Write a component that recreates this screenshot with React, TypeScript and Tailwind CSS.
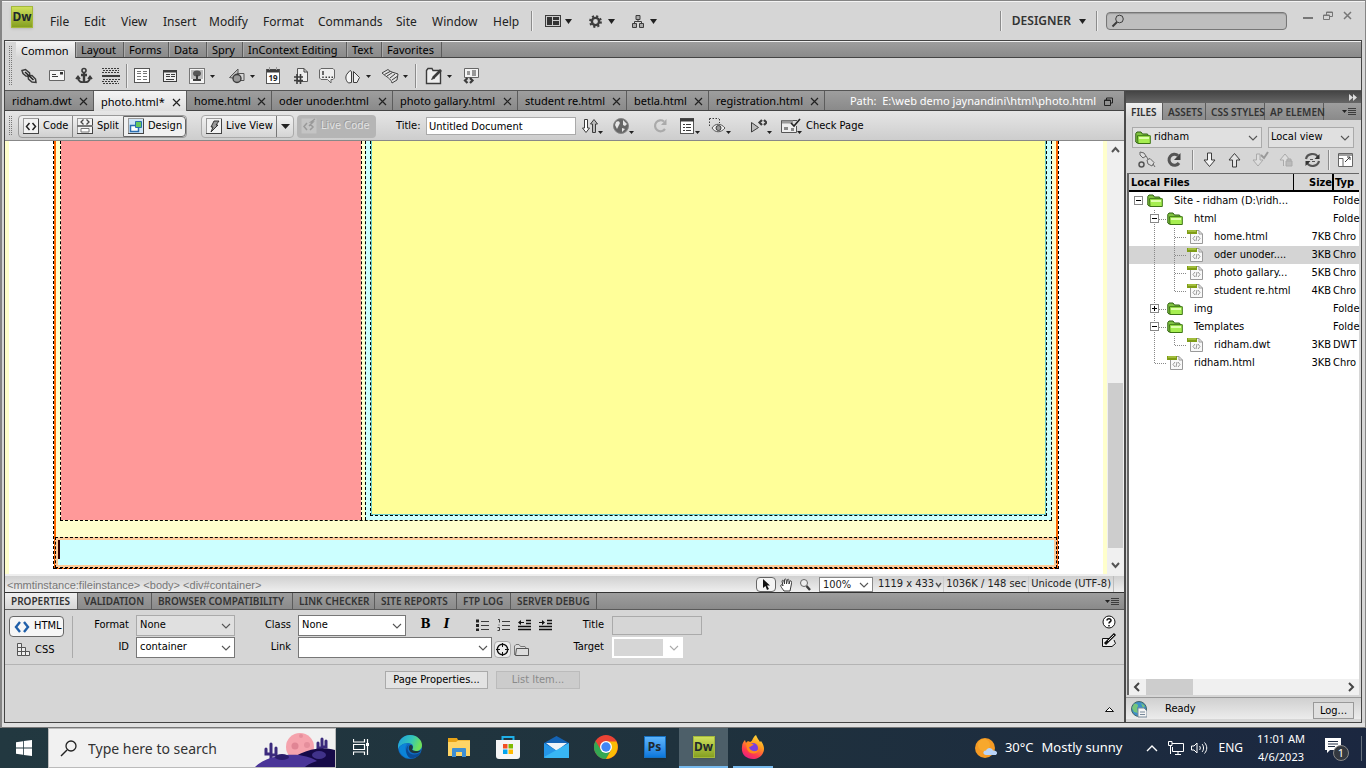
import React from "react";

const ui = "font-['Noto_Sans',sans-serif]";
const tahoma = "font-['DejaVu_Sans_Condensed','DejaVu_Sans',sans-serif]";

const Sep = ({ className = "h-6" }: { className?: string }) => (
  <span className={"w-0.5 shrink-0 border-l border-[#8c8c8c] bg-[#eeeeee] " + className} />
);
const Caret = ({ w = 5 }: { w?: number }) => (
  <svg width={w} height={w > 5 ? 5 : 3} viewBox="0 0 8 5" className="shrink-0" preserveAspectRatio="none">
    <path d="M0 0H8L4 5Z" fill="#222" />
  </svg>
);
const Chevron = ({ color = "#555" }: { color?: string }) => (
  <svg width="10" height="6" viewBox="0 0 10 6" className="pointer-events-none absolute top-1/2 right-1 -mt-[3px]">
    <path d="M1 1L5 5L9 1" fill="none" stroke={color} strokeWidth="1.1" />
  </svg>
);
const Grip = ({ h }: { h: number }) => (
  <svg width="4" height={h} className="shrink-0">
    {Array.from({ length: Math.floor(h / 2) }, (_, i) => (
      <path key={i} d={`M0 ${i * 2}.5H1M2 ${i * 2}.5H3`} stroke="#777" />
    ))}
  </svg>
);

function Icon({ children, w = 18, h = 18 }: { children: React.ReactNode; w?: number; h?: number }) {
  return (
    <svg width={w} height={h} viewBox={`0 0 ${w} ${h}`} fill="none" stroke="#3c3c3c" className="shrink-0" aria-hidden="true">
      {children}
    </svg>
  );
}

function Tool({ label, w, caret, children }: { label: string; w: string; caret?: boolean; children: React.ReactNode }) {
  return (
    <button aria-label={label} className={"flex h-6 shrink-0 items-center gap-1 " + w}>
      {children}
      {caret && <Caret />}
    </button>
  );
}

const AppLogo = ({ text, blue }: { text: string; blue?: boolean }) => (
  <span
    className={
      "flex h-[22px] w-[22px] shrink-0 items-center justify-center border text-[12px] leading-none font-bold text-[#20282c] shadow " +
      ui +
      (blue ? " border-[#1670c0] bg-linear-to-b from-[#5cb4fb] to-[#0878dc]" : " border-[#a4b83c] bg-linear-to-b from-[#cfe05a] to-[#86a020]")
    }
  >
    {text}
  </span>
);

function TitleBar() {
  const menus = [
    ["File", "w-[34px]"], ["Edit", "w-[37px]"], ["View", "w-[42px]"], ["Insert", "w-[46px]"], ["Modify", "w-[54px]"],
    ["Format", "w-[55px]"], ["Commands", "w-[78px]"], ["Site", "w-9"], ["Window", "w-[61px]"], ["Help", "w-[38px]"],
  ];
  return (
    <header className="flex h-[38px] shrink-0 items-center pr-3 pl-[9px] text-[#222]">
      <div className="mb-2 flex w-[39px] shrink-0"><AppLogo text="Dw" /></div>
      <nav className="flex pt-0.5 text-[12px]">
        {menus.map(([m, w]) => (
          <button key={m} className={"shrink-0 text-left whitespace-nowrap " + w}>{m}</button>
        ))}
      </nav>
      <Sep className="h-5" />
      <button aria-label="Layout" className="ml-3 flex w-11 items-center gap-1">
        <Icon w={16} h={12}>
          <rect x=".5" y=".5" width="15" height="11" fill="#ccc" />
          <path d="M2 2H7V10H2ZM8 2H14V5H8ZM8 6H14V10H8Z" fill="#333" stroke="none" />
        </Icon>
        <Caret w={7} />
      </button>
      <button aria-label="Extend" className="flex w-[43px] items-center gap-1.5">
        <Icon w={13} h={13}>
          <circle cx="6.5" cy="6.5" r="3.6" strokeWidth="2.4" />
          <circle cx="6.5" cy="6.5" r="5.4" strokeWidth="2" strokeDasharray="2.1 2.14" />
        </Icon>
        <Caret w={7} />
      </button>
      <button aria-label="Site" className="flex items-center gap-1.5">
        <Icon w={12} h={13}>
          <path d="M4 .5H8V4.5H4ZM.5 8.5H4.5V12.5H.5ZM7.5 8.5H11.5V12.5H7.5Z" fill="#aaa" />
          <path d="M6 5V6.500M2.500 8V6.500H9.500V8" />
        </Icon>
        <Caret w={7} />
      </button>
      <div className="grow" />
      <Sep className="h-5" />
      <button className="ml-2.5 flex items-center gap-2 text-[12px] font-semibold text-[#333]">DESIGNER <Caret w={7} /></button>
      <Sep className="mr-2 ml-2.5 h-5" />
      <label className="flex h-[18px] w-[181px] items-center rounded-sm border border-[#777] bg-[#bebebe] pl-1 shadow-[inset_0_1px_1px_#999]">
        <Icon w={14} h={14}><circle cx="8.5" cy="5" r="3.8" /><path d="M6 8L1.5 12.5" strokeWidth="2" /></Icon>
        <input aria-label="Search" className="h-4 w-full min-w-0 bg-transparent text-[11px] outline-none" />
      </label>
      <div className="mb-2.5 ml-4 flex items-center gap-2.5 *:flex">
        <button aria-label="Minimize"><Icon w={10} h={10}><path d="M0 7H10" stroke="#777" strokeWidth="2" /></Icon></button>
        <button aria-label="Restore"><Icon w={10} h={10}><path d="M3.5 4V1H9.5V5.5H7M.5 4H6.5V8.5H.5ZM.5 4.5H6M3 1.500H9" stroke="#777" /></Icon></button>
        <button aria-label="Close"><Icon w={10} h={10}><path d="M1 1L8 8M8 1L1 8" stroke="#777" strokeWidth="1.5" /></Icon></button>
      </div>
    </header>
  );
}

const stripBg = "bg-linear-to-b from-[#9e9e9e] to-[#8a8a8a]";

function InsertBar() {
  const tabs = [
    ["Common", "w-[60px]"], ["Layout", "w-12"], ["Forms", "w-[45px]"], ["Data", "w-[38px]"], ["Spry", "w-9"],
    ["InContext Editing", "w-[104px]"], ["Text", "w-[35px]"], ["Favorites", "w-[60px]"],
  ];
  return (
    <section className="flex h-[49px] shrink-0 border-t border-[#f0f0f0]">
      <div className="flex w-[11px] shrink-0 items-center pl-1"><Grip h={40} /></div>
      <div className="flex min-w-0 grow flex-col">
        <div className={"flex h-4 shrink-0 border-b border-[#444] text-[11px] leading-[15px] text-black " + stripBg}>
          {tabs.map(([t, w], i) => (
            <button
              key={t}
              className={
                "shrink-0 border-r border-[#5c5c5c] text-left whitespace-nowrap " + w + (i === 0 ? " -mb-px bg-linear-to-b from-[#f4f4f4] to-[#d6d6d6] pl-[5px]" : " border-l border-l-[#aaa] pl-1")
              }
            >
              {t}
            </button>
          ))}
        </div>
        <div className="flex grow items-center pt-1 pl-1">
          <Tool label="Hyperlink" w="w-7">
            <Icon>
              <path d="M2 3.500L5.500 2.500L9.500 6L10 9.500L6 9L3 6.500Z" fill="#ddd" strokeWidth="1.500" />
              <path d="M8 9L12 8.500L15.500 12L16 15.500L12 15L8.500 12Z" fill="#ddd" strokeWidth="1.500" />
              <path d="M5 5L13.500 13" stroke="#222" strokeWidth="1.500" />
            </Icon>
          </Tool>
          <Tool label="Email Link" w="w-[27px]">
            <Icon><path d="M1.5 3.5H16.5V13.5H1.5Z" fill="#f6f6f6" stroke="#666" /><path d="M4 9.500H10M4 7.500H8" /><path d="M12 5H15V7.500H12Z" fill="#333" stroke="none" /></Icon>
          </Tool>
          <Tool label="Named Anchor" w="w-[27px]">
            <Icon><circle cx="9" cy="3.500" r="2" strokeWidth="1.6" /><path d="M9 6V15M6 8H12" strokeWidth="2.4" /><path d="M2.500 10C3 14.500 6 15.500 9 15C12 15.500 15 14.500 15.500 10M1 12L3 9.500L5 12M13 12L15 9.500L17 12" strokeWidth="1.800" /></Icon>
          </Tool>
          <Tool label="Horizontal Rule" w="w-[24px]">
            <Icon><path d="M0 1.5H18M1 3.500H17M0 5.500H17M1 12.5H18M0 14.5H16M1 16.5H17" strokeDasharray="2 1" /><path d="M0 9H18" strokeWidth="2" /></Icon>
          </Tool>
          <Sep className="mr-1.5 h-6" />
          <Tool label="Table" w="w-7">
            <Icon w={16} h={16}><rect x=".5" y=".5" width="15" height="14" fill="#fff" stroke="#555" /><path d="M3 3.500H7M9 3.500H13M3 5.500H7M9 5.500H13M3 8.500H7M9 8.500H13M3 11.500H7M9 11.500H13" stroke="#777" /></Icon>
          </Tool>
          <Tool label="Insert Div" w="w-[26px]">
            <Icon w={16} h={16}><rect x="1.500" y="2.500" width="13" height="11" fill="#eee" /><path d="M2 3.500H14" strokeWidth="2" /><path d="M4 6.500H8M4 8.500H8M4 11.500H12M9 6.500H13M9 8.500H13" /></Icon>
          </Tool>
          <Tool label="Images" w="w-10" caret>
            <Icon><rect x="1.500" y="1.500" width="15" height="15" fill="#f4f4f4" stroke="#777" /><path d="M3 3H15V12H3Z" fill="#bbb" stroke="none" /><ellipse cx="9" cy="6.500" rx="4" ry="3" fill="#555" stroke="none" /><path d="M9 8V12M5 13H13" strokeWidth="2" /></Icon>
          </Tool>
          <Tool label="Media" w="w-[37px]" caret>
            <Icon><path d="M1.500 10.500L10 2V12Z" fill="#bbb" stroke="#555" /><path d="M9 6.500H16V13.500H9Z" fill="#d6d6d6" stroke="#555" /><circle cx="9" cy="11.500" r="4" fill="#999" strokeWidth="1.400" /></Icon>
          </Tool>
          <Tool label="Date" w="w-[27px]">
            <Icon w={16} h={18}><rect x="1.500" y="2.500" width="13" height="14" fill="#fff" stroke="#555" /><path d="M2 4H14" strokeWidth="3" /><path d="M4.500 0V3M11.500 0V3" stroke="#999" /><text x="8" y="14" fontSize="8" fontWeight="bold" textAnchor="middle" fill="#222" stroke="none">19</text></Icon>
          </Tool>
          <Tool label="Server-Side Include" w="w-[26px]">
            <Icon><path d="M5.500 1.500H12L15.500 5V14.500H5.500Z" fill="#eee" stroke="#555" /><path d="M12 1.500V5H15.500" /><path d="M2 10H11M2 13.500H11M5 7V17M8.500 7V17" strokeWidth="1.6" /></Icon>
          </Tool>
          <Tool label="Comment" w="w-[26px]">
            <Icon><path d="M3 1.500H15L16.500 3V11L15 12.500H13V16L9.500 12.500H3L1.500 11V3Z" fill="#eee" stroke="#666" /><path d="M5 4V8M5 9.500V11M7.500 10.200H9M10.500 10.200H12M13.500 10.200H15" strokeWidth="1.5" /></Icon>
          </Tool>
          <Tool label="Head" w="w-[37px]" caret>
            <Icon><path d="M4.500 16C1 13 1.500 9 3 7L6 3.500L7.500 4.500V15.500Z" fill="#f6f6f6" /><path d="M9.500 4.500L15.500 10.500L13 15.500H9.500Z" fill="#eee" /></Icon>
          </Tool>
          <Tool label="Script" w="w-[34px]" caret>
            <Icon><path d="M1 6L7 2.500C9 5 13 5.500 17 7L16 13L11 16C10 11.500 6 10.500 1 6Z" fill="#e2e2e2" stroke="#444" /><path d="M3.500 7.500L9 4.500M6 9L11.500 5.500M9 11L14 7M11 13L16 9.500" /></Icon>
          </Tool>
          <Sep className="mr-2 h-6" />
          <Tool label="Templates" w="w-[37px]" caret>
            <Icon><path d="M1.500 3.500L3 1.500H7L8 3.500H15.500V16.500H1.500Z" fill="#eee" strokeWidth="1.400" /><path d="M16 3L8.500 10.500" strokeWidth="2.6" /><path d="M8.500 9L6.500 12.500L10 11" fill="#333" strokeWidth=".8" /></Icon>
          </Tool>
          <Tool label="Tag Chooser" w="w-7">
            <Icon><path d="M2.500 1.500H16.500V10.500H2.500Z" fill="#f5f5f5" stroke="#666" /><path d="M10 4H14M10 6H14M10 8H14M5 5H8M5 7H8" /><path d="M5.500 11L3 13.500L5.500 16M8 11L10.500 13.500L8 16" strokeWidth="2.200" /></Icon>
          </Tool>
        </div>
      </div>
    </section>
  );
}

function DocTabs() {
  const tabs = [
    ["ridham.dwt", "w-[89px]"], ["photo.html*", "w-[93px]"], ["home.html", "w-[85px]"], ["oder unoder.html", "w-[121px]"],
    ["photo gallary.html", "w-[125px]"], ["student re.html", "w-[109px]"], ["betla.html", "w-[82px]"], ["registration.html", "w-[116px]"],
  ];
  return (
    <div className={"flex h-5 shrink-0 border-b border-[#444] text-[11px] text-black " + stripBg}>
      {tabs.map(([t, w], i) => (
        <button
          key={t}
          className={"flex shrink-0 items-center justify-between border-r border-[#5c5c5c] pt-0.5 pr-[5px] pl-[7px] whitespace-nowrap " + w + (i === 1 ? " -mb-px bg-linear-to-b from-[#f4f4f4] to-[#dedede]" : "")}
        >
          {t}
          <Icon w={9} h={9}><path d="M1 1L8 8M8 1L1 8" stroke="#222" strokeWidth="1.2" /></Icon>
        </button>
      ))}
      <div className="flex min-w-0 grow items-center justify-end gap-2 pt-0.5 pr-[11px] whitespace-pre text-white">
        <span>Path:  E:\web demo jaynandini\html\photo.html</span>
        <Icon w={9} h={9}><path d="M2.500 3V1H8.500V6H6.500M.5 3H6.500V8.500H.5ZM0 3.500H6" stroke="#222" /></Icon>
      </div>
    </div>
  );
}

const DocBox = ({ children }: { children: React.ReactNode }) => (
  <svg width="16" height="16" viewBox="0 0 16 16" fill="none" className="shrink-0">
    <rect x=".5" y=".5" width="15" height="15" fill="#f2f2f2" stroke="#999" />
    <path d="M0 15.500H16M15.500 1V15" stroke="#444" />
    {children}
  </svg>
);

function DocToolbar() {
  const b = "flex h-full shrink-0 items-center gap-1 pl-1 whitespace-nowrap ";
  return (
    <div className={"flex h-[30px] shrink-0 items-center border-b border-[#888] bg-linear-to-b from-[#e6e6e6] to-[#cdcdcd] pt-px pl-1 text-[11px] text-black " + tahoma}>
      <div className="w-[9px]"><Grip h={20} /></div>
      <div className="flex h-[23px] shrink-0 overflow-hidden rounded border border-[#999] bg-linear-to-b from-[#f2f2f2] to-[#d0d0d0]">
        <button className={b + "w-[54px] border-r border-[#888]"}>
          <DocBox><path d="M6.500 5L3.500 8.500L6.500 12M9.500 5L12.500 8.500L9.500 12" stroke="#222" strokeWidth="1.5" /></DocBox>Code
        </button>
        <button className={b + "w-[50px]"}>
          <DocBox><path d="M6.500 1.500L4 4L6.500 6.500M9.500 1.500L12 4L9.500 6.500" stroke="#444" strokeWidth="1.3" /><path d="M0 8H16" stroke="#777" strokeWidth="2" /><path d="M4 10.500H12V14H4Z" fill="#fff" stroke="#777" /></DocBox>Split
        </button>
        <button className={b + "w-[63px] rounded-r border border-[#666] bg-[#f0f0f0]"}>
          <DocBox><path d="M1 1H15V15H1Z" fill="#cfe4f6" /><path d="M2.500 7.500H10.500V13.500H2.500Z" fill="#fff" stroke="#2a6db0" strokeWidth="1.500" /><path d="M7.500 3.500H13.500V9.500H7.500Z" fill="#66c85a" stroke="#2a6db0" /></DocBox>Design
        </button>
      </div>
      <Sep className="mx-1.5" />
      <div className="flex h-[23px] shrink-0 rounded border border-[#aaa] bg-linear-to-b from-[#f2f2f2] to-[#d4d4d4]">
        <button className={b + "w-[75px] border-r border-[#777]"}>
          <DocBox><path d="M8 3H13L10 7H12L5 14L7 9H5Z" fill="#999" stroke="#222" strokeWidth=".9" /></DocBox>Live View
        </button>
        <button aria-label="Live View options" className="flex w-4 items-center justify-center"><Caret w={9} /></button>
      </div>
      <button disabled className={b + "ml-[3px] h-[23px]! w-[79px] rounded bg-[#b5b5b5] text-[#e2e2e2] [text-shadow:-1px_-1px_0_#999]"}>
        <svg width="16" height="16" fill="none" className="shrink-0"><rect width="15" height="15" x=".5" y=".5" fill="#c4c4c4" /><path d="M6 5L3 8.500L6 12M9 6L12 9L9 12M14 1L10 4H12L8 8" stroke="#999" strokeWidth="1.500" /></svg>Live Code
      </button>
      <Sep className="mr-3 ml-1.5" />
      <label htmlFor="doctitle" className="w-[30px] shrink-0">Title:</label>
      <input id="doctitle" defaultValue="Untitled Document" className="h-[18px] w-[150px] shrink-0 border border-[#aaa] bg-white px-0.5 outline-none" />
      <div className="ml-1.5 flex items-center [&_svg+svg]:mb-1 [&_svg+svg]:self-end">
        <Tool label="File management" w="w-[31px] gap-0!" caret>
          <Icon w={16}><path d="M2.500 2.500H5.500V11H7.500L4 15.500L.5 11H2.500Z" fill="#fff" /><path d="M10.500 15.500H13.500V7H15.500L12 2.500L8.500 7H10.500Z" fill="#bbb" /></Icon>
        </Tool>
        <Tool label="Preview in browser" w="w-[29px] gap-0!" caret>
          <Icon w={16}><circle cx="8" cy="9" r="7.500" fill="#666" stroke="#888" /><path d="M3 5C6 3 8 6 6 8L4 12L2 8ZM10 3L14 7L12 9L10 8ZM9 11L12 12L9 15Z" fill="#e6e6e6" stroke="none" /></Icon>
        </Tool>
        <Sep className="mr-2" />
        <Tool label="Refresh" w="w-7">
          <Icon w={16}><path d="M13 12A5.500 5.500 0 1 1 12 4.500" stroke="#aaa" strokeWidth="2.2" /><path d="M14.500 2V8H9Z" fill="#aaa" stroke="none" /></Icon>
        </Tool>
        <Tool label="View options" w="w-7 gap-0!" caret>
          <Icon w={15}><rect x=".5" y="1.500" width="13" height="15" fill="#fff" stroke="#555" /><path d="M0 3H14" strokeWidth="3" /><path d="M3 7.500H5M3 10.500H5M3 13.500H5M6 7.500H11M6 10.500H11M6 13.500H11" /></Icon>
        </Tool>
        <Tool label="Visual aids" w="w-[30px] gap-0!" caret>
          <Icon><path d="M1.500 1.500H11M1.500 1.500V10M11.500 2V6" strokeDasharray="1.500 1.500" /><path d="M4 11C7 6 13 6 17 11C13 16 7 16 4 11Z" fill="#eee" stroke="#555" /><circle cx="10.500" cy="11" r="2.500" fill="#999" /></Icon>
        </Tool>
        <Sep className="mr-2.5" />
        <Tool label="Validate" w="w-[30px] gap-0!" caret>
          <Icon w={17}><path d="M1.500 5.500V15L8.500 10.500Z" fill="#bbb" /><path d="M12 3L9.500 5.500L12 8M14 3L16.500 5.500L14 8" strokeWidth="2.200" /></Icon>
        </Tool>
        <button className="flex shrink-0 items-center gap-1 whitespace-nowrap">
          <Icon w={22}><path d="M1.500 3.500H17M1.500 3.500V15.500H16.500V9" fill="#eee" stroke="#555" /><path d="M2 5H13" stroke="#999" strokeWidth="3" /><path d="M4 10H8V13H4ZM11 11H14V14H11Z" fill="#888" stroke="none" /><path d="M11 6L14 9L20 2" stroke="#222" strokeWidth="1.600" /><path d="M17 14H22L19.500 17Z" fill="#222" stroke="none" /></Icon>
          Check Page
        </button>
        <Sep className="ml-2" />
      </div>
    </div>
  );
}

function Canvas() {
  return (
    <div className="flex min-h-0 grow bg-white">
      <div className="w-1 shrink-0 bg-[#ffffcc]" />
      <div className="flex min-w-0 grow px-11 pb-[5px]">
        <div className="flex grow border-x border-dashed border-black">
          <div className="flex min-w-0 grow flex-col border-b border-dashed border-black bg-[#ff6600] px-0.5">
            <div className="flex grow bg-[#ffffcc] px-1 pb-4">
              <div className="flex grow gap-[3px] border-b border-dashed border-black">
                <div className="w-[302px] shrink-0 border-x border-dashed border-black bg-[#ff9999] bg-clip-padding" />
                <div className="flex grow border-x border-dashed border-black bg-[#ccffff] px-1 pb-1">
                  <div className="grow border-x border-b border-dashed border-black">
                    <div className="h-full border-x border-b border-[#66cccc] bg-[#ffff99]" />
                  </div>
                </div>
              </div>
            </div>
            <div className="-mx-px h-[31px] shrink-0 border border-dashed border-black bg-[#ffcc99]">
              <div className="h-full border-2 border-[#ffcc99] bg-[#ccffff]"><div className="h-[19px] w-0.5 bg-[#330000]" /></div>
            </div>
          </div>
        </div>
      </div>
      <div className="w-1 shrink-0 bg-[#ffffcc]" />
      <div className="flex w-[17px] shrink-0 flex-col items-center bg-[#f0f0f0]">
        <Icon w={9} h={17}><path d="M1 11L4.500 7L8 11" stroke="#555" strokeWidth="2" /></Icon>
        <div className="grow-[225]" />
        <div className="w-[15px] grow-[165] bg-[#cdcdcd]" />
        <div className="grow-[9]" />
        <Icon w={9} h={17}><path d="M1 6L4.500 10L8 6" stroke="#555" strokeWidth="2" /></Icon>
      </div>
    </div>
  );
}

function StatusBar() {
  return (
    <div className={"flex h-[18px] shrink-0 items-center border-t-2 border-[#eeeeee] bg-linear-to-b from-[#d0d0d0] to-[#efefef] pt-px pr-1 text-[11px] whitespace-nowrap text-[#222] " + tahoma}>
      <div className="min-w-0 grow overflow-hidden pl-0.5 font-['Liberation_Sans',sans-serif] leading-4 text-[#777]">&lt;mmtinstance:fileinstance&gt; &lt;body&gt; &lt;div#container&gt;</div>
      <button aria-label="Select tool" className="flex h-[15px] w-5 items-center justify-center rounded border border-[#666] bg-[#f4f4f4]">
        <Icon w={10} h={13}><path d="M2 1V10L4.500 8L6 12L8 11L6 7.500H9Z" fill="#111" stroke="none" /></Icon>
      </button>
      <button aria-label="Hand tool" className="ml-1"><Icon w={13} h={14}><path d="M4 13C2 10 0 8 1 7C2 6 3 8 3 8L2 3C3 1 4 3 4.500 6V1.500C5.500 0 6.500 1 6.500 6L7.500 1.500C9 .5 9 2 9 6L10 3C11.500 2 12 4 11 8L10 13Z" fill="#fff" /></Icon></button>
      <button aria-label="Zoom tool" className="mx-1.5"><Icon w={12} h={14}><circle cx="5" cy="5" r="3.500" fill="#eee" stroke="#666" /><path d="M7.500 8L11 12" strokeWidth="2.400" /></Icon></button>
      <div className="relative ml-0.5 h-[15px]">
        <select aria-label="Magnification" className="block h-[15px] w-[54px] appearance-none border border-[#888] bg-white pl-[3px] text-[11px] leading-3"><option>100%</option></select>
        <Chevron />
      </div>
      <button className="ml-[5px] flex items-center">1119 x 433 <Icon w={9} h={6}><path d="M2 1L4.500 4.500L7 1" strokeWidth="1.500" stroke="#555" /></Icon></button>
      <span className="border-x border-[#ccc] px-0.5">1036K / 148 sec</span>
      <span className="border-r border-[#bbb] px-0.5">Unicode (UTF-8)</span>
      <span className="w-1.5" />
    </div>
  );
}

function Select({ id, value, w, cls = "border-[#777] bg-white", off }: { id: string; value: string; w: string; cls?: string; off?: boolean }) {
  return (
    <div className={"relative h-[21px] shrink-0 " + w}>
      <select id={id} disabled={off} className={"block h-full w-full appearance-none border pl-[3px] text-[11px] text-black " + cls}><option>{value}</option></select>
      <Chevron color={off ? "#aaa" : "#555"} />
    </div>
  );
}

function PanelMenu() {
  return <Icon w={15} h={9}><path d="M0 3H5L2.500 6Z" fill="#222" stroke="none" /><path d="M6 1.500H14M6 3.500H14M6 5.500H14M6 7.500H14" /></Icon>;
}

function Properties() {
  const tabs = [
    ["PROPERTIES", "w-[73px]"], ["VALIDATION", "w-[74px]"], ["BROWSER COMPATIBILITY", "w-[141px]"], ["LINK CHECKER", "w-[82px]"],
    ["SITE REPORTS", "w-[82px]"], ["FTP LOG", "w-[54px]"], ["SERVER DEBUG", "w-[86px]"],
  ];
  return (
    <section className="shrink-0 border-t border-[#333]">
      <div className={"flex h-[17px] items-center border-b border-[#5a5a5a] text-[10px] font-semibold text-[#333] " + stripBg}>
        {tabs.map(([t, w], i) => (
          <button key={t} className={"h-4 shrink-0 border-r border-[#5c5c5c] pl-[6px] text-left leading-4 whitespace-nowrap " + w + (i === 0 ? " bg-linear-to-b from-[#f0f0f0] to-[#d6d6d6]" : "")}>{t}</button>
        ))}
        <div className="grow" />
        <button aria-label="Panel menu" className="mr-1"><PanelMenu /></button>
      </div>
      <div className={"flex h-[55px] items-start border-b border-[#b4b4b4] pt-[5px] pl-1 text-[11px] text-black " + tahoma}>
        <div className="mt-px flex w-[55px] shrink-0 flex-col gap-1">
          <button className="flex h-[21px] items-center gap-1 rounded border border-[#666] bg-[#f6f6f6] pl-1">
            <Icon w={16} h={12}><path d="M6 1L2 6L6 11M10 1L14 6L10 11" stroke="#1f5ea8" strokeWidth="2.400" /></Icon>HTML
          </button>
          <button className="flex h-[18px] items-center gap-1 pl-2">
            <Icon w={14} h={14}><path d="M.5.5H4.500V12.500H.5ZM4.500 4.500H8.500V12.500H4.500ZM8.500 8.500H12.500V12.500H8.500ZM.5 4.500H5M.5 8.500H9" fill="#eee" stroke="#555" /></Icon>CSS
          </button>
        </div>
        <div className="mt-px ml-2 h-[42px] w-px shrink-0 bg-[#aaa]" />
        <div className="grid shrink-0 grid-cols-[56px_99px] items-center gap-x-[7px] gap-y-px text-right">
          <label htmlFor="fmt">Format</label><Select id="fmt" value="None" w="w-[99px]" cls="border-[#aaa] bg-[#e0e0e0]" />
          <label htmlFor="eid">ID</label><Select id="eid" value="container" w="w-[99px]" />
        </div>
        <div className="ml-[27px] grid shrink-0 grid-cols-[29px_108px_86px] items-center gap-x-[7px] gap-y-px text-right">
          <label htmlFor="cls">Class</label><Select id="cls" value="None" w="w-[108px]" />
          <div className="flex w-[152px] items-center pb-0.5 pl-0.5 *:w-[21px] *:shrink-0">
            <button aria-label="Bold"><b className="font-['DejaVu_Serif'] text-[12px] leading-4">B</b></button>
            <button aria-label="Italic" className="mr-[10px]"><i className="font-['DejaVu_Serif'] text-[12px] leading-4 font-bold">I</i></button>
            <button aria-label="Unordered list" className="ml-[9px]"><Icon w={13} h={12}><path d="M0 .5H3V3.500H0ZM0 5H3V8H0ZM0 9.500H3V12H0Z" fill="#222" stroke="none" /><path d="M5 2.500H13M5 6.500H13M5 10.500H13" /></Icon></button>
            <button aria-label="Ordered list"><Icon w={13} h={12}><path d="M1 .5H2.500V3.500M.5 8.500H2.500V11.500H.5M5 2.500H13M5 6.500H13M5 10.500H13M2 5.500V6.500" /></Icon></button>
            <button aria-label="Outdent"><Icon w={13} h={12}><path d="M8 1.500H13M8 4.500H13M0 7.500H13M0 10.500H13" stroke="#111" strokeWidth="1.600" /><path d="M0 3.500L3 1V6ZM3 3H6V4H3Z" fill="#111" stroke="none" /></Icon></button>
            <button aria-label="Indent"><Icon w={13} h={12}><path d="M8 1.500H13M8 4.500H13M0 7.500H13M0 10.500H13" stroke="#111" strokeWidth="1.600" /><path d="M6 3.500L3 1V6ZM0 3H3V4H0Z" fill="#111" stroke="none" /></Icon></button>
          </div>
          <label htmlFor="lnk">Link</label>
          <div className="relative col-span-2 h-[21px] w-[194px]">
            <input id="lnk" className="h-full w-full border border-[#777] bg-white px-1 outline-none" /><Chevron />
          </div>
        </div>
        <div className="-ml-[5px] flex shrink-0 items-center gap-0.5 pt-[26px]">
          <button aria-label="Point to file" className="flex h-[17px] w-[17px] items-center justify-center rounded border border-[#aaa] bg-[#eee]"><Icon w={13} h={13}><circle cx="6.500" cy="6.500" r="5.200" stroke="#111" strokeWidth="1.400" /><path d="M6.500 0V4M6.500 9V13M0 6.500H4M9 6.500H13" stroke="#111" /></Icon></button>
          <button aria-label="Browse"><Icon w={17} h={14}><path d="M1.500 12V3L3 1.500H6L7.500 3.500H12L13 5" fill="#ddd" stroke="#777" /><path d="M3.500 5.500H15.500V12.500H2.500Z" fill="#ddd" stroke="#555" /></Icon></button>
        </div>
        <div className="ml-[38px] grid shrink-0 grid-cols-[36px_90px] items-center gap-x-2 gap-y-px text-right">
          <label htmlFor="ttl">Title</label><input id="ttl" disabled className="my-px h-[19px] w-[90px] border border-[#aaa] bg-[#d6d6d6]" />
          <label htmlFor="tgt">Target</label><Select id="tgt" value="" w="w-[71px]" off cls="border-white bg-[#d6d6d6] border-y-2 border-l-2 border-r-[20px]" />
        </div>
        <div className="grow" />
        <div className="mr-[5px] flex w-5 flex-col items-center gap-1">
          <button aria-label="Help"><Icon w={14} h={14}><circle cx="7" cy="7" r="6" fill="#fff" stroke="#111" /><path d="M5 5.500C5 3 9 3 9 5.500C9 7 7 6.500 7 8.500M7 10V11.500" stroke="#111" strokeWidth="1.500" /></Icon></button>
          <button aria-label="Quick tag editor"><Icon w={16} h={15}><path d="M8 5.500H1.500V13.500H11L14.500 10.500L13 7" fill="#eee" stroke="#111" /><path d="M14 1L6 9L4 11" stroke="#111" strokeWidth="3" /><path d="M13 2L7 8" stroke="#ddd" /></Icon></button>
        </div>
      </div>
      <div className={"flex h-[57px] items-start pt-1.5 pr-[9px] text-[11px] " + tahoma}>
        <button className="ml-[380px] h-[18px] w-[103px] shrink-0 border border-[#aaa] bg-[#e3e3e3] leading-4 whitespace-nowrap text-black">Page Properties...</button>
        <button disabled className="ml-2 h-[18px] w-[84px] shrink-0 border border-[#bbb] bg-[#ccc] leading-4 text-[#8a8a8a]">List Item...</button>
        <div className="grow" />
        <button aria-label="Collapse" className="mt-[34px]"><Icon w={11} h={8}><path d="M1.500 6.500L5.500 2.500L9.500 6.500Z" fill="#fff" stroke="#111" /></Icon></button>
      </div>
    </section>
  );
}

const Folder = () => (
  <svg width="16" height="14" viewBox="0 0 16 14" className="shrink-0">
    <path d="M.8 11V2.500L2 1H6L7.500 3H12.500L13.500 5V12H2Z" fill="#7fc241" stroke="#2f5e10" />
    <path d="M2.500 4.700H15.300V12.500H3Z" fill="#a6ee50" stroke="#3c7414" />
    <path d="M4 6H14V8H4Z" fill="#ddffaa" />
  </svg>
);
const HtmlFile = () => (
  <svg width="17" height="16" viewBox="0 0 17 16" className="shrink-0" fill="none">
    <path d="M3.500 1.500H12L15.500 5V14.500H3.500Z" fill="#f8f8f8" stroke="#999" />
    <path d="M12 1.500V5H15.500" stroke="#999" />
    <path d="M8 7L6 9.500L8 12M11 7L13 9.500L11 12M10 7L9 12" stroke="#999" />
    <path d="M0 1H10V5H0Z" fill="#7f9d16" /><path d="M1 2H9" stroke="#c4dc62" />
  </svg>
);

type Node = { name: string; size: string; type: string; depth: number; kind: "open" | "closed" | "file"; last?: boolean; trunk?: boolean };
const files: Node[] = [
  { name: "Site - ridham (D:\\ridh...", size: "", type: "Folde", depth: 0, kind: "open" },
  { name: "html", size: "", type: "Folde", depth: 1, kind: "open" },
  { name: "home.html", size: "7KB", type: "Chro", depth: 2, kind: "file", trunk: true },
  { name: "oder unoder....", size: "3KB", type: "Chro", depth: 2, kind: "file", trunk: true },
  { name: "photo gallary...", size: "5KB", type: "Chro", depth: 2, kind: "file", trunk: true },
  { name: "student re.html", size: "4KB", type: "Chro", depth: 2, kind: "file", trunk: true, last: true },
  { name: "img", size: "", type: "Folde", depth: 1, kind: "closed" },
  { name: "Templates", size: "", type: "Folde", depth: 1, kind: "open" },
  { name: "ridham.dwt", size: "3KB", type: "DWT", depth: 2, kind: "file", trunk: true, last: true },
  { name: "ridham.html", size: "3KB", type: "Chro", depth: 1, kind: "file", last: true },
];

function TreeGuide({ n }: { n: Node }) {
  const w = 18 + n.depth * 20;
  const x = n.depth === 2 ? 46 : 26;
  return (
    <svg width={w} height="18" className="shrink-0" fill="none" stroke="#888">
      <g strokeDasharray="1 1">
        {n.depth > 0 && <path d={`M${x - 0.5} 0V${n.last ? 9 : 18}M${x} 9.500H${w}`} />}
        {n.trunk && <path d="M25.500 0V18" />}
      </g>
      {n.kind !== "file" && (
        <g>
          <rect x={n.depth * 16 + 5.5} y="4.500" width="8" height="8" fill="#fff" />
          <path d={`M${n.depth * 16 + 7} 8.500H${n.depth * 16 + 12}`} stroke="#000" />
          {n.kind === "closed" && <path d={`M${n.depth * 16 + 9.5} 6V11`} stroke="#000" />}
        </g>
      )}
    </svg>
  );
}

function FilesPanel() {
  const tabs = [["FILES", "w-[37px]"], ["ASSETS", "w-[43px]"], ["CSS STYLES", "w-[59px]"], ["AP ELEMEN", "w-[59px]"]];
  return (
    <aside className="flex w-[237px] shrink-0 flex-col border-l-2 border-[#4a4a4a]">
      <div className="flex h-3 shrink-0 items-center justify-end bg-linear-to-b from-[#444] to-[#666] pr-1">
        <button aria-label="Collapse to icons"><Icon w={8} h={7}><path d="M0 0L4 3.500L0 7ZM4 0L8 3.500L4 7Z" fill="#ddd" stroke="none" /></Icon></button>
      </div>
      <div className={"flex h-[17px] shrink-0 items-center text-[10px] font-semibold text-[#333] " + stripBg}>
        {tabs.map(([t, w], i) => (
          <button key={t} className={"h-full shrink-0 border-r border-[#5c5c5c] pl-[5px] text-left leading-4 whitespace-nowrap " + w + (i === 0 ? " bg-linear-to-b from-[#f0f0f0] to-[#d6d6d6]" : "")}>{t}</button>
        ))}
        <div className="grow" />
        <button aria-label="Panel menu" className="mr-1"><PanelMenu /></button>
      </div>
      <div className={"flex shrink-0 items-center gap-1.5 pt-[7px] pl-1.5 " + tahoma}>
        <div className="relative">
          <select aria-label="Site" className="block h-[21px] w-[130px] appearance-none border border-[#aaa] bg-[#e0e0e0] pl-[21px] text-[11px]"><option>ridham</option></select>
          <span className="pointer-events-none absolute top-1 left-[3px]"><Folder /></span><Chevron />
        </div>
        <div className="relative">
          <select aria-label="View" className="block h-[21px] w-[86px] appearance-none border border-[#aaa] bg-[#e0e0e0] pl-[2px] text-[11px]"><option>Local view</option></select><Chevron />
        </div>
      </div>
      <div className="flex h-[25px] shrink-0 items-center pb-0.5 pl-3">
        <Tool label="Connect" w="w-7"><Icon><path d="M2 1L6 2L8 5L5 7L2 4ZM9 9L12 7.500L16 11.500L14 15L10 13Z" stroke="#666" fill="#ddd" /><path d="M8 5L10 8M15 13L17 16" stroke="#666" /><circle cx="3.500" cy="13.500" r="2.500" strokeWidth="1.500" stroke="#555" /></Icon></Tool>
        <Tool label="Refresh" w="w-[26px]"><Icon w={16}><path d="M13 12A5.500 5.500 0 1 1 12 4.500" strokeWidth="3" stroke="#555" /><path d="M14.500 2V9H8Z" fill="#444" stroke="none" /></Icon></Tool>
        <Sep className="mr-2 h-5" />
        <Tool label="Get" w="w-[25px]"><Icon w={15}><path d="M5.500 2H9.500V9H13L7.500 15.500L2 9H5.500Z" fill="#f4f4f4" /></Icon></Tool>
        <Tool label="Put" w="w-[25px]"><Icon w={15}><path d="M5.500 16H9.500V9H13L7.500 2.500L2 9H5.500Z" fill="#e4e4e4" /></Icon></Tool>
        <Tool label="Check out" w="w-[26px]"><Icon w={17}><path d="M4.500 3H8V9H11L6 15L1 9H4.500Z" fill="#ddd" stroke="#aaa" /><path d="M9 4L12 7L16 1" stroke="#999" strokeWidth="2" /></Icon></Tool>
        <Tool label="Check in" w="w-[26px]"><Icon w={16}><path d="M5.500 15V9H2L7 3L12 9" fill="#ddd" stroke="#aaa" /><path d="M8 10H14V15H8ZM9 10V8H13V10" fill="#bbb" stroke="#aaa" /></Icon></Tool>
        <Tool label="Synchronize" w="w-[24px]"><Icon w={17}><path d="M2 8A6.500 6 0 0 1 14 6M15 10A6.500 6 0 0 1 3 12" strokeWidth="2.200" stroke="#555" /><path d="M15.500 3V8H10.500ZM1.500 15V10H6.500Z" fill="#333" stroke="none" /><path d="M6 8.500H9M8 10.500H11" stroke="#555" /></Icon></Tool>
        <Sep className="mr-2 h-5" />
        <Tool label="Expand" w="w-4"><Icon w={15} h={16}><path d="M.5 1.500H14.500V14.500H.5ZM.5 6.500H5V14.500" fill="#fff" stroke="#666" /><path d="M.5 3H14M7 10L12 5M9 5H12V8" /></Icon></Tool>
      </div>
      <div className={"mr-0.5 ml-px flex min-h-0 grow flex-col border-t border-l-2 border-[#666] bg-white text-[11px] " + tahoma}>
        <table className="w-full table-fixed border-collapse text-black">
          <thead>
            <tr className="h-4 border-b-2 border-black bg-[#d6d6d6] text-left leading-[14px] whitespace-nowrap">
              <th className="border-r border-black p-0 pt-0.5 pl-0.5">Local Files</th>
              <th className="w-10 border-r-2 border-black p-0 pt-0.5 text-right">Size</th>
              <th className="w-[26px] p-0 pt-0.5 pl-px">Typ</th>
            </tr>
          </thead>
          <tbody>
            {files.map((n, i) => (
              <tr key={n.name} className={"h-[18px] leading-[18px] whitespace-nowrap " + (i === 3 ? "bg-[#d4d4d4]" : "")}>
                <td className="p-0">
                  <div className="flex h-[18px] items-center"><TreeGuide n={n} />{n.kind === "file" ? <HtmlFile /> : <Folder />}<span className={n.kind === "file" ? "pl-2.5" : "pl-[11px]"}>{n.name}</span></div>
                </td>
                <td className="p-0 pr-0.5 text-right">{n.size}</td>
                <td className="p-0">{n.type}</td>
              </tr>
            ))}
          </tbody>
        </table>
        <div className="grow" />
        <div className="flex h-4 shrink-0 items-center bg-[#f0f0f0]">
          <Icon w={17} h={10}><path d="M10 1L6 5L10 9" stroke="#444" strokeWidth="2" /></Icon>
          <div className="h-4 w-[47px] bg-[#cdcdcd]" />
          <div className="grow" />
          <Icon w={17} h={10}><path d="M7 1L11 5L7 9" stroke="#444" strokeWidth="2" /></Icon>
        </div>
      </div>
      <div className={"mt-0.5 mb-[3px] flex h-[22px] shrink-0 items-center border-t border-[#999] bg-linear-to-b from-[#d0d0d0] to-[#ececec] pt-0.5 pr-[7px] pl-[5px] text-[11px] text-black " + tahoma}>
        <svg width="16" height="17" viewBox="0 0 16 17"><circle cx="8" cy="8" r="7.500" fill="#3d8fc8" stroke="#466" /><path d="M3 3C7 2 8 5 6 7L7 12L3 11L1 7ZM10 2L14 5L12 7Z" fill="#76c67a" /><path d="M7 7H13L16 10V16H7Z" fill="#f4f4f4" stroke="#789" /><path d="M9 11H14M9 13.500H14" stroke="#789" /></svg>
        <span className="ml-[18px] grow">Ready</span>
        <button className="mt-0.5 h-[17px] w-[41px] border border-[#999] bg-[#e0e0e0] leading-[14px]">Log...</button>
      </div>
    </aside>
  );
}

function TaskApp({ label, children, active, line }: { label: string; children: React.ReactNode; active?: boolean; line?: boolean }) {
  return (
    <button aria-label={label} className={"flex h-10 w-[49px] shrink-0 flex-col items-center " + (active ? "bg-[#4d5f69]" : "")}>
      <span className="flex h-[38px] items-center">{children}</span>
      <span className={"h-0.5 " + (active ? "w-full bg-[#76b9ed]" : line ? "w-10 bg-[#76b9ed]" : "")} />
    </button>
  );
}

function Taskbar() {
  return (
    <footer className="flex h-10 shrink-0 items-center bg-linear-to-r from-[#223840] via-[#1f323d] to-[#1b2740] text-white">
      <button aria-label="Start" className="flex w-12 shrink-0 justify-center">
        <svg width="16" height="16" viewBox="0 0 16 16" fill="#fff"><path d="M0 2.300L7 1.200V7.600H0ZM7.800 1L16 0V7.600H7.800ZM0 8.400H7V14.800L0 13.800ZM7.800 8.400H16V16L7.800 15Z" /></svg>
      </button>
      <label className="relative flex h-10 w-72 shrink-0 items-center gap-[11px] overflow-hidden border border-[#bbb] bg-[#f1f1f1] pl-[11px] text-[#333]">
        <Icon w={17} h={17}><circle cx="11" cy="6" r="5" stroke="#222" strokeWidth="1.300" /><path d="M7 10L1 16" stroke="#222" strokeWidth="1.400" /></Icon>
        <input placeholder="Type here to search" className="w-[150px] bg-transparent text-[14px] outline-none placeholder:text-[#333]" />
        <svg width="80" height="38" viewBox="0 0 80 38" className="absolute right-0 bottom-0">
          <circle cx="45" cy="18" r="14" fill="#f5a3ad" /><circle cx="40" cy="17" r="3.500" fill="#e08594" /><circle cx="52" cy="16" r="3" fill="#e58f9c" /><circle cx="46" cy="7" r="2" fill="#e58f9c" />
          <path d="M16 33V15M11 20V25H16M21 19V26H16M67 26V10M63 14V19H67M71 12V18H67" stroke="#3b2a7c" strokeWidth="3" strokeLinecap="round" fill="none" />
          <path d="M26 38C36 28 56 15 80 21V38Z" fill="#160a48" /><path d="M0 38C12 26 34 25 44 26C50 27 58 29 62 32C56 34 52 36 50 38Z" fill="#4a3598" /><ellipse cx="27" cy="28" rx="7" ry="3" fill="#2b1d6a" /><ellipse cx="64" cy="26" rx="7" ry="4" fill="#40328a" />
        </svg>
      </label>
      <TaskApp label="Task View">
        <Icon w={16} h={16}><path d="M.5 0V3H11.500V0M.5 16V13H11.500V16M.5 5.500H11.500V10.500H.5ZM14.500 0V16" stroke="#fff" strokeWidth="1.200" /><path d="M13 4H16V7H13Z" fill="#fff" stroke="none" /></Icon>
      </TaskApp>
      <TaskApp label="Edge">
        <svg width="24" height="24" viewBox="0 0 24 24">
          <defs><linearGradient id="e1" x1="0" y1="0" x2="1" y2=".3"><stop stopColor="#1e9de0" /><stop offset=".6" stopColor="#34c6b8" /><stop offset="1" stopColor="#6fe05a" /></linearGradient></defs>
          <circle cx="12" cy="12" r="12" fill="#0f6cc4" />
          <path d="M0 11C1 4 6 0 12 0C19 0 24 5 24 10C24 14 21 16 18 16C15 16 14 15 14.500 14C16 12 15 8 10 8C5 8 1 11 0 14Z" fill="url(#e1)" />
          <path d="M9 9C6 12 7 19 13 22C9 25 2 20 1 14C2 10 6 8 9 9Z" fill="#0b84d8" />
          <path d="M11 10C8 13 10 19 15 19.500C19 20 22 18 23 17C21 22 15 24 12 23C7 20 7 12 11 10Z" fill="#0a4a94" />
          <path d="M11.500 10.500C10 13 11 17 15 18C19 19 22 17 23.500 15C21 17 15 16 14 14.500C16 12 14 9 11.500 10.500Z" fill="#1e3640" />
        </svg>
      </TaskApp>
      <TaskApp label="File Explorer">
        <svg width="22" height="19" viewBox="0 0 22 19"><path d="M0 0H9L10 2H22V6H0Z" fill="#e8a317" /><path d="M0 4H8L10 2.500H22V18H0Z" fill="#ffd566" /><path d="M4 11C4 10.500 4.500 10 5 10H17C17.500 10 18 10.500 18 11V19H14V14H8V19H4Z" fill="#3f8fd2" /></svg>
      </TaskApp>
      <TaskApp label="Store">
        <svg width="24" height="24" viewBox="0 0 24 24"><path d="M6.500 6V2H17.500V6" fill="none" stroke="#1fb0e8" strokeWidth="2" /><path d="M0 5H24V21C24 23 23 24 21 24H3C1 24 0 23 0 21Z" fill="#f5f5f5" /><path d="M7 9H11.500V13.500H7Z" fill="#f25022" /><path d="M12.500 9H17V13.500H12.500Z" fill="#7fba00" /><path d="M7 14.500H11.500V19H7Z" fill="#00a4ef" /><path d="M12.500 14.500H17V19H12.500Z" fill="#ffb900" /></svg>
      </TaskApp>
      <TaskApp label="Mail">
        <svg width="25" height="22" viewBox="0 0 25 22"><path d="M0 7L12.500 0L25 7V12H0Z" fill="#1463b4" /><path d="M2 7H23L12.500 15Z" fill="#eef3f8" /><path d="M0 7L25 22H0Z" fill="#2596e8" /><path d="M25 7V22H2L0 21Z" fill="#38b6f4" /></svg>
      </TaskApp>
      <TaskApp label="Chrome">
        <svg width="24" height="24" viewBox="0 0 24 24"><circle cx="12" cy="12" r="12" fill="#ea4335" /><path d="M1.600 6A12 12 0 0 0 12 24L17 15L12 12L7 15Z" fill="#34a853" /><path d="M22.400 6.500H12L17.200 15L12 24A12 12 0 0 0 22.400 6.500Z" fill="#fbbc05" /><circle cx="12" cy="12" r="6" fill="#fff" /><circle cx="12" cy="12" r="4.700" fill="#4285f4" /></svg>
      </TaskApp>
      <TaskApp label="Photoshop"><AppLogo text="Ps" blue /></TaskApp>
      <TaskApp label="Dreamweaver" active><AppLogo text="Dw" /></TaskApp>
      <TaskApp label="Firefox" line>
        <svg width="24" height="24" viewBox="0 0 24 24">
          <defs><linearGradient id="f1" x1=".8" y1="0" x2=".3" y2="1"><stop stopColor="#ffe33e" /><stop offset=".4" stopColor="#ff9a1f" /><stop offset=".75" stopColor="#ff3b4e" /><stop offset="1" stopColor="#e61e82" /></linearGradient></defs>
          <path d="M12 24C5 24 0 19 1 12C1 8 3 6 4 5L5 8C6 6 8 6 9 7C12 6 11 3 15 0C16 3 18 5 19 7L20 6C23 10 24 14 22 18C20 22 16 24 12 24Z" fill="url(#f1)" />
          <circle cx="12" cy="13" r="5" fill="#7a3fe0" /><path d="M5 9C8 7 11 8 13 10C11 10 10 12 8 12C9 16 14 18 18 14C17 20 8 20 6 14Z" fill="#ff8a1c" />
        </svg>
      </TaskApp>
      <div className="grow" />
      <button className="flex shrink-0 items-center gap-2 text-[13px] whitespace-nowrap">
        <svg width="22" height="20" viewBox="0 0 22 20"><circle cx="10" cy="10" r="10" fill="#f59a23" /><circle cx="9" cy="7" r="6" fill="#f9b233" opacity=".6" /><path d="M11 17C8 17 7 13 11 12.500C12 9 17 9 18 12.500C23 12 23 17 20 17Z" fill="#b9d4f8" /></svg>
        <span>30°C</span><span>Mostly sunny</span>
      </button>
      <button aria-label="Show hidden icons" className="ml-6"><Icon w={12} h={8}><path d="M1 7L6 2L11 7" stroke="#fff" strokeWidth="1.400" /></Icon></button>
      <button aria-label="Network" className="ml-2.5"><Icon w={17} h={15}><path d="M4 2.500H15.500V10.500H4.500V6M7 13.500H13M10 11V13M.5.5H4V4.500H.5ZM2.500 5V13" stroke="#fff" /></Icon></button>
      <button aria-label="Volume" className="ml-1.5"><Icon w={17} h={14}><path d="M.5 5V9H3L6 12V2L3 5ZM8.500 5C9.500 6 9.500 8 8.500 9M11 3C13 5 13 9 11 11M13.500 1.500C16.500 5 16.500 9 13.500 12.500" stroke="#fff" /></Icon></button>
      <span className="ml-2.5 text-[12px]">ENG</span>
      <button className="ml-3 w-[52px] shrink-0 text-center text-[11px] leading-[18px] whitespace-nowrap">11:01 AM<br />4/6/2023</button>
      <button aria-label="Notifications, 1 new" className="ml-3 flex w-[43px] shrink-0 border-r border-[#66707c]">
        <svg width="27" height="25" viewBox="0 0 27 25" className="ml-1"><path d="M2 2H18V14H7L4 17V14H2Z" fill="#fff" /><path d="M5 5.500H15M5 8H15M5 10.500H12" stroke="#222f45" /><circle cx="18" cy="17" r="7.500" fill="#33383f" stroke="#888" /><text x="18" y="21" fontSize="11" textAnchor="middle" fill="#fff">1</text></svg>
      </button>
      <span className="w-1 shrink-0" />
    </footer>
  );
}

export default function App() {
  return (
    <div className={"flex h-screen min-h-[560px] flex-col overflow-hidden " + ui}>
      <div className="flex min-h-0 grow flex-col border-t border-r border-l-2 border-[#858585] bg-[#d6d6d6]">
        <div className="h-px bg-[#f4f4f4]" />
        <TitleBar />
        <main className="mr-[3px] ml-0.5 flex min-h-0 grow flex-col border border-[#444]">
          <InsertBar />
          <div className="flex min-h-0 grow border-t border-[#555]">
            <div className="flex min-w-0 grow flex-col">
              <DocTabs />
              <DocToolbar />
              <Canvas />
              <StatusBar />
              <Properties />
            </div>
            <FilesPanel />
          </div>
        </main>
        <div className="h-1 shrink-0 bg-[#e0e0e0]" />
        <div className="h-px shrink-0 bg-[#777]" />
      </div>
      <Taskbar />
    </div>
  );
}
